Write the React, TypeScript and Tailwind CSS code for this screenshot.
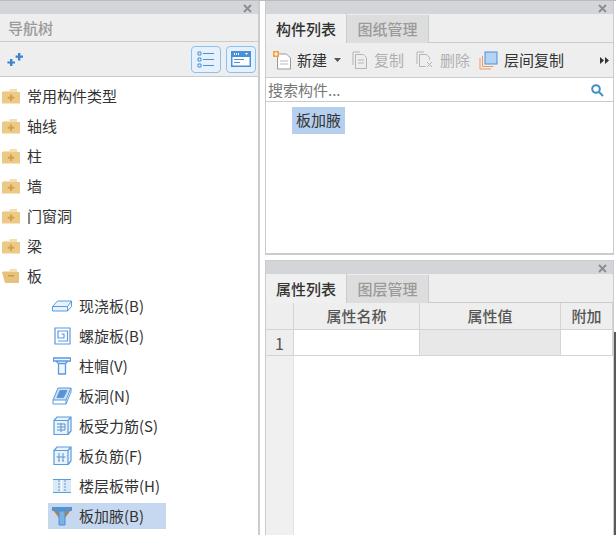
import React from 'react';

const font = { fontFamily: '"Noto Sans CJK SC", "Liberation Sans", sans-serif' };

const CloseX = () => (
    <svg width="9" height="9" viewBox="0 0 9 9" className="text-[#8b8d91]">
        <path d="M1 1l7 7M8 1L1 8" stroke="currentColor" strokeWidth="1.8" />
    </svg>
);

const TitleBar = () => (
    <div className="h-[13px] bg-[#d3d5d9] flex items-center justify-end pr-[6px] pt-[1px] shrink-0">
        <CloseX />
    </div>
);

const Folder = ({ open = false }: { open?: boolean }) => (
    <svg width="20" height="16" viewBox="0 0 20 16" className="shrink-0">
        <path d="M2 3h6l1-2h7v3H2z" fill="#f3dfb4" />
        {open ? (
            <>
                <path d="M1 4h17v11H4z" fill="#e6c27c" />
                <path d="M7 7h6v1.500H7z" fill="#c99c4a" />
            </>
        ) : (
            <>
                <path d="M1 4h18v11.500H1z" fill="#ecca86" />
                <path d="M9 6.500h2v2.200h2.300v2H11V13H9v-2.300H6.700v-2H9z" fill="#d3a04d" />
            </>
        )}
    </svg>
);

const blue = '#5a9ae0';

const icons: Record<string, React.ReactNode> = {
    slab: (
        <svg width="20" height="12" viewBox="0 0 20 12" fill="none" stroke={blue}>
            <path d="M.5 6.500l5-5.500h14l-4 5.500zM.5 6.500v4.500h15V6.500M15.500 11l4-4.500V1" fill="#eaf2fb" />
        </svg>
    ),
    spiral: (
        <svg width="17" height="18" viewBox="0 0 17 18" fill="none" stroke={blue} strokeWidth="1.200">
            <path d="M1 1v16h15V1zM1 1h15" />
            <path d="M4 14h9.500V4H4v7h6V7H7.500" />
        </svg>
    ),
    cap: (
        <svg width="18" height="18" viewBox="0 0 18 18" fill="none" stroke={blue} strokeWidth="1.300">
            <path d="M.5 1h17v3H.5zM3 4l2.500 2.500h7L15 4M5.500 6.500V17h7V6.500" fill="#f0f6fd" />
        </svg>
    ),
    hole: (
        <svg width="20" height="18" viewBox="0 0 20 18" fill="none" stroke={blue}>
            <path d="M6 1h13l-5 12H1z" fill="#cfe0f3" />
            <path d="M8 3.500h7L11.500 10.500H5z" fill="#5b93cf" />
            <path d="M1 13v4h13v-4M14 17l5-12V1" />
        </svg>
    ),
    rebar: (
        <svg width="19" height="20" viewBox="0 0 19 20" fill="none" stroke={blue} strokeWidth="1.200">
            <path d="M1 4.500h14v14H1zM1 4.500l3-3.500h14v14l-3 3.500M15 4.500L18 1" fill="#eaf2fb" />
            <path d="M4 8h8v3H4M4 14h8v-3M8 7v9" stroke="#5b93cf" strokeWidth="1" />
        </svg>
    ),
    neg: (
        <svg width="19" height="20" viewBox="0 0 19 20" fill="none" stroke={blue} strokeWidth="1.200">
            <path d="M1 4.500h14v14H1zM1 4.500l3-3.500h14v14l-3 3.500M15 4.500L18 1" fill="#eaf2fb" />
            <path d="M6 7v8M10 7v8M3.500 11h9M5 15h2M9 15h2" stroke="#5b93cf" strokeWidth="1" />
        </svg>
    ),
    strip: (
        <svg width="18" height="14" viewBox="0 0 18 14" fill="none">
            <rect x="0" y="0" width="18" height="14" fill="#dbe8f6" />
            <path d="M0 .5h18M0 13.500h18" stroke={blue} />
            <path d="M6 1v12M12 1v12" stroke={blue} strokeDasharray="2 1" />
            <path d="M8.500 1v12" stroke="#fff" strokeWidth="1" />
        </svg>
    ),
    haunch: (
        <svg width="20" height="20" viewBox="0 0 20 20" fill="none">
            <path d="M1 4h18l-6 8H7z" fill="#b57f45" />
            <path d="M0 1h20v4H0z" fill="#4f94d8" />
            <path d="M7 5h6v14H7z" fill="#7db1e4" stroke="#4a90d9" />
        </svg>
    ),
};

const folders = ['常用构件类型', '轴线', '柱', '墙', '门窗洞', '梁'];

const children = [
    { icon: 'slab', label: '现浇板(B)' },
    { icon: 'spiral', label: '螺旋板(B)' },
    { icon: 'cap', label: '柱帽(V)' },
    { icon: 'hole', label: '板洞(N)' },
    { icon: 'rebar', label: '板受力筋(S)' },
    { icon: 'neg', label: '板负筋(F)' },
    { icon: 'strip', label: '楼层板带(H)' },
    { icon: 'haunch', label: '板加腋(B)', selected: true },
];

const NavTree = () => (
    <div className="w-[260px] shrink-0 flex flex-col border-r-2 border-[#c9cbcf] h-full overflow-hidden">
        <TitleBar />
        <div className="h-[28px] bg-[#eeeeee] border-b border-[#c9cbcf] flex items-center pl-[8px] pt-[2px] text-[15px] font-medium text-[#9a9a9a]">导航树</div>
        <div className="h-[35px] bg-[#eeeeee] border-b border-[#c9cbcf] flex items-center justify-between pl-[7px] pr-[2px]">
            <svg width="16" height="13" viewBox="0 0 16 13" fill="#3f82cf">
                <path d="M3 6h2.400v2.400H8v2.200H5.400V13H3v-2.400H.4V8.400H3zM11 0h2.400v2.600H16v2.200h-2.600V7.500H11V4.800H8.600V2.600H11z" />
            </svg>
            <div className="flex gap-[5px]">
                <div className="w-[30px] h-[27px] rounded-[4px] border border-[#8cc0f2] bg-[#e6f1fc] flex items-center justify-center">
                    <svg width="18" height="17" viewBox="0 0 18 17" fill="none" stroke="#4a90d9">
                        <path d="M1 1h3v3H1zM1 7h3v3H1zM1 13h3v3H1zM6 2.500h11M6 8.500h11M6 14.500h11" />
                    </svg>
                </div>
                <div className="w-[30px] h-[27px] rounded-[4px] border border-[#8cc0f2] bg-[#e6f1fc] flex items-center justify-center">
                    <svg width="20" height="16" viewBox="0 0 20 16">
                        <rect x="0" y="0" width="20" height="16" fill="#4a90d9" />
                        <rect x="1.500" y="6" width="17" height="8.500" fill="#fff" />
                        <path d="M3 2h1v2H3zM5 2h1v2H5zM7 2h1v2H7zM14 2h3l-1.500 2z" fill="#fff" />
                        <path d="M3 8h10v1H3zM3 11h6v1H3z" fill="#4a90d9" />
                    </svg>
                </div>
            </div>
        </div>
        <div className="flex-1 bg-white text-[15px] text-[#333] pt-[4px]">
            {folders.map((name) => (
                <div key={name} className="h-[30px] flex items-center gap-[6px] pl-[1px]">
                    <Folder />
                    <span>{name}</span>
                </div>
            ))}
            <div className="h-[30px] flex items-center gap-[6px] pl-[1px]">
                <Folder open />
                <span>板</span>
            </div>
            {children.map((c) => (
                <div key={c.label} className="h-[30px] flex items-center pl-[48px]">
                    <div className={`flex items-center h-[26px] w-[118px] ${c.selected ? 'bg-[#c6d8ef]' : ''}`}>
                        <div className="w-[31px] flex justify-center shrink-0 pl-[1px] pr-[4px]">{icons[c.icon]}</div>
                        <span className="whitespace-nowrap">{c.label}</span>
                    </div>
                </div>
            ))}
        </div>
    </div>
);

const Tabs = ({ active, other }: { active: string; other: string }) => (
    <div className="h-[29px] bg-[#eeeeee] border-b border-[#c9cbcf] flex text-[15px] font-medium shrink-0">
        <div className="w-[81px] h-[29px] pt-[1px] bg-[#f0f0f0] border-r border-[#c9cbcf] flex items-center justify-center text-[#333]">{active}</div>
        <div className="w-[82px] h-[28px] mt-[1px] bg-[#dddddd] border-r border-[#c9cbcf] flex items-center justify-center text-[#9a9a9a]">{other}</div>
    </div>
);

const Toolbar = () => (
    <div className="h-[35px] bg-[#eeeeee] border-b border-[#c9cbcf] flex items-center pl-[7px] pr-[3px] text-[15px] text-[#333]">
        <svg width="20" height="19" viewBox="0 0 20 19" fill="none">
            <path d="M4.500 3h9l4 4v11h-13z" fill="#fff" stroke="#9a9a9a" />
            <path d="M7 10h8M7 13h8" stroke="#bbb" />
            <rect x="0" y="0" width="6" height="6" fill="#f2a23c" />
            <path d="M3 1v4M1 3h4" stroke="#fff" />
        </svg>
        <span className="ml-[4px]">新建</span>
        <svg width="7" height="4" viewBox="0 0 7 4" className="ml-[7px]"><path d="M0 0h7L3.500 4z" fill="#555" /></svg>
        <svg width="16" height="18" viewBox="0 0 16 18" fill="none" stroke="#b5b5b5" className="ml-[11px]">
            <path d="M1 14V1h7M3.500 3.500h8l3 3v11h-11zM6 9h6M6 12h6" />
        </svg>
        <span className="ml-[6px] text-[#b0b0b0]">复制</span>
        <svg width="18" height="18" viewBox="0 0 18 18" fill="none" stroke="#b5b5b5" className="ml-[12px]">
            <path d="M1 13V1h7M3.500 3.500h7l3 3V9M3.500 3.500v12h6M11 11l5 5M16 11l-5 5" />
        </svg>
        <span className="ml-[6px] text-[#b0b0b0]">删除</span>
        <svg width="19" height="19" viewBox="0 0 19 19" fill="none" className="ml-[9px]">
            <path d="M1 7v11h11M3.500 5v10.500h11" stroke="#ee9a5c" />
            <rect x="6" y="1" width="12" height="12" fill="#b5d3f5" stroke="#4a90d9" />
        </svg>
        <span className="ml-[6px]">层间复制</span>
        <svg width="9" height="7" viewBox="0 0 9 7" className="ml-auto mr-[1px]"><path d="M0 0l4 3.500L0 7zM5 0l4 3.500L5 7z" fill="#333" /></svg>
    </div>
);

const ComponentList = () => (
    <div className="h-[254px] flex flex-col border-x border-b-2 border-[#c9cbcf] shrink-0">
        <TitleBar />
        <Tabs active="构件列表" other="图纸管理" />
        <Toolbar />
        <div className="h-[24px] bg-white border-b border-[#c9cbcf] flex items-center justify-between pl-[2px] pt-[1px] pr-[9px] text-[15px] text-[#777] shrink-0">
            <span>搜索构件...</span>
            <svg width="13" height="13" viewBox="0 0 13 13" fill="none" stroke="#3f8fc9" strokeWidth="2">
                <circle cx="5" cy="5" r="3.800" />
                <path d="M8 8l4 4" />
            </svg>
        </div>
        <div className="flex-1 bg-white pt-[5px] pl-[26px]">
            <div className="w-[53px] h-[27px] bg-[#b5cfee] flex items-center justify-center text-[15px] text-[#333]">板加腋</div>
        </div>
    </div>
);

const gridCols = 'grid grid-cols-[28px_126px_141px_52px]';

const PropertyList = () => (
    <div className="flex-1 flex flex-col border-x border-t border-[#c9cbcf] mt-[5px] min-h-0">
        <TitleBar />
        <Tabs active="属性列表" other="图层管理" />
        <div className="flex-1 bg-white relative">
            <div className={`${gridCols} h-[27px] text-[15px] text-[#555] font-medium`}>
                <div className="bg-[#eeeeee] border-r border-b border-[#d4d4d4]" />
                {['属性名称', '属性值', '附加'].map((h) => (
                    <div key={h} className="bg-[#eeeeee] border-r border-b border-[#d4d4d4] flex items-center justify-center pt-[1px]">{h}</div>
                ))}
            </div>
            <div className={`${gridCols} h-[26px] text-[16px]`}>
                <div className="bg-[#eeeeee] border-r border-b border-[#d4d4d4] flex items-center justify-center pt-[1px] text-[#555]">1</div>
                <div className="bg-white border-r border-b border-[#d4d4d4]" />
                <div className="bg-[#e8e8e8] border-r border-b border-[#d4d4d4]" />
                <div className="bg-white border-r border-b border-[#d4d4d4]" />
            </div>
            <div className="absolute left-0 top-[53px] bottom-0 w-[28px] bg-[#f0f0f0] border-r border-[#e4e4e4]" />
        </div>
    </div>
);

export default function App() {
    return (
        <div className="w-[616px] h-[535px] bg-white flex border-t border-[#b9bbbf] overflow-hidden" style={font}>
            <NavTree />
            <div className="w-[5px] bg-white shrink-0" />
            <div className="w-[349px] flex flex-col h-full shrink-0">
                <ComponentList />
                <PropertyList />
            </div>
            <div className="w-[2px] mt-[331px] bg-[#5a5a5a] shrink-0" />
        </div>
    );
}
